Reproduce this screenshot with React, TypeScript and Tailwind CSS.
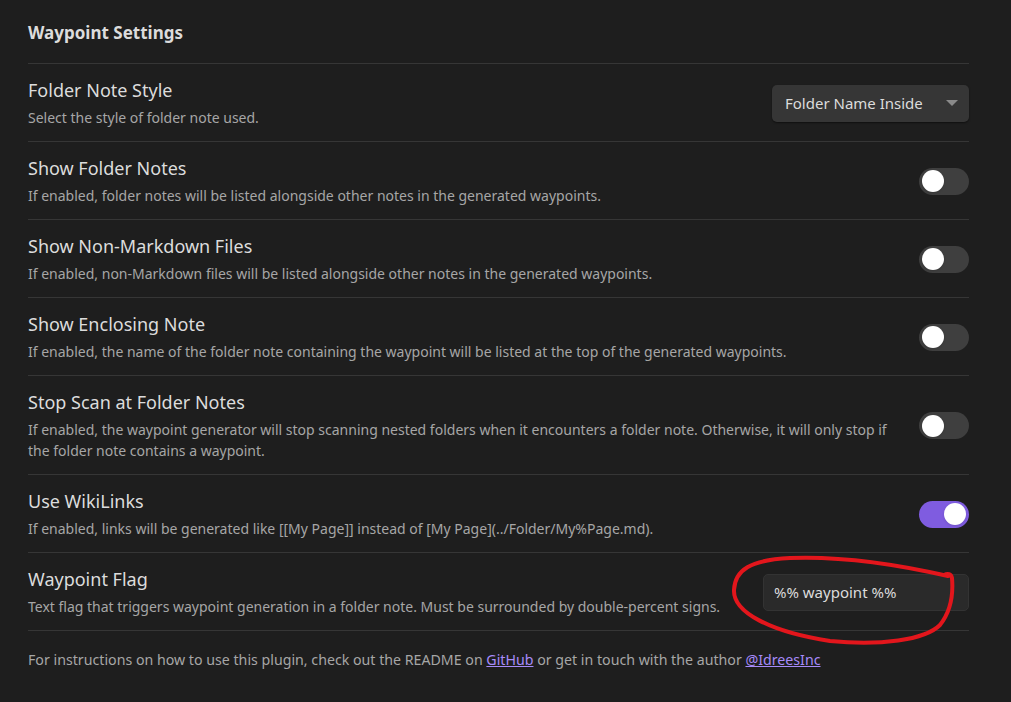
import { useState } from 'react';

interface ToggleRow {
  name: string;
  desc: string;
  on: boolean;
}

const toggles: ToggleRow[] = [
  {
    name: 'Show Folder Notes',
    desc: 'If enabled, folder notes will be listed alongside other notes in the generated waypoints.',
    on: false,
  },
  {
    name: 'Show Non-Markdown Files',
    desc: 'If enabled, non-Markdown files will be listed alongside other notes in the generated waypoints.',
    on: false,
  },
  {
    name: 'Show Enclosing Note',
    desc: 'If enabled, the name of the folder note containing the waypoint will be listed at the top of the generated waypoints.',
    on: false,
  },
  {
    name: 'Stop Scan at Folder Notes',
    desc: 'If enabled, the waypoint generator will stop scanning nested folders when it encounters a folder note. Otherwise, it will only stop if the folder note contains a waypoint.',
    on: false,
  },
  {
    name: 'Use WikiLinks',
    desc: 'If enabled, links will be generated like [[My Page]] instead of [My Page](../Folder/My%Page.md).',
    on: true,
  },
];

function Toggle({ initial }: { initial: boolean }) {
  const [on, setOn] = useState(initial);
  return (
    <button
      onClick={() => setOn(!on)}
      className={`flex h-[27px] w-[50px] shrink-0 items-center rounded-full px-[3px] ${
        on ? 'justify-end bg-[#7f5ce0]' : 'justify-start bg-[#3f3f3f]'
      }`}
    >
      <span className="h-[22px] w-[22px] rounded-full bg-white shadow" />
    </button>
  );
}

function SettingRow({
  name,
  desc,
  children,
}: {
  name: string;
  desc: string;
  children: React.ReactNode;
}) {
  return (
    <div className="flex items-center gap-6 border-t border-[#363636] pt-[14px] pb-[13px]">
      <div className="flex-1">
        <div className="text-[18px] leading-[24px] text-[#dcdcdc]">{name}</div>
        <div className="mt-[5px] text-[14px] leading-[21px] text-[#a6a6a6]">{desc}</div>
      </div>
      {children}
    </div>
  );
}

export default function App() {
  const [flag, setFlag] = useState('%% waypoint %%');

  return (
    <div
      className="relative h-[702px] w-[1011px] overflow-hidden bg-[#1e1e1e] pl-[28px] pr-[42px]"
      style={{ fontFamily: '"Noto Sans", "Open Sans", sans-serif' }}
    >
      <h2 className="pt-[19px] pb-[16px] text-[17px] font-bold leading-[28px] text-[#dcdcdc]">
        Waypoint Settings
      </h2>

      <SettingRow name="Folder Note Style" desc="Select the style of folder note used.">
        <div className="flex h-[37px] w-[197px] items-center justify-between rounded-[5px] bg-[#363636] pl-[13px] pr-[10px] text-[15px] text-[#dcdcdc] shadow-[0_1px_2px_rgba(0,0,0,0.5)]">
          <span>Folder Name Inside</span>
          <svg width="14" height="8" viewBox="0 0 14 8">
            <path d="M1 1 L13 1 L7 7 Z" fill="#8a8a8a" />
          </svg>
        </div>
      </SettingRow>

      {toggles.map((t) => (
        <SettingRow key={t.name} name={t.name} desc={t.desc}>
          <Toggle initial={t.on} />
        </SettingRow>
      ))}

      <SettingRow
        name="Waypoint Flag"
        desc="Text flag that triggers waypoint generation in a folder note. Must be surrounded by double-percent signs."
      >
        <input
          value={flag}
          onChange={(e) => setFlag(e.target.value)}
          className="h-[37px] w-[206px] rounded-[5px] border border-[#333] bg-[#2a2a2a] px-[10px] text-[15px] text-[#dcdcdc] outline-none"
        />
      </SettingRow>

      <div className="border-t border-[#363636] pt-[18px] text-[14.2px] leading-[22px] text-[#a6a6a6]">
        For instructions on how to use this plugin, check out the README on{' '}
        <a href="#" className="text-[#a78bfa] underline">
          GitHub
        </a>{' '}
        or get in touch with the author{' '}
        <a href="#" className="text-[#a78bfa] underline">
          @IdreesInc
        </a>
      </div>

      {/* hand drawn annotation */}
      <svg className="pointer-events-none absolute left-0 top-0" width="1011" height="702">
        <path
          d="M948 576 C 900 565, 840 556, 790 558 C 750 560, 735 570, 734 590 C 733 612, 770 632, 830 641 C 880 646, 925 640, 940 625 C 952 610, 953 590, 952 578 C 951 574, 948 573, 944 575"
          fill="none"
          stroke="#e3161c"
          strokeWidth="4"
          strokeLinecap="round"
          strokeLinejoin="round"
        />
      </svg>
    </div>
  );
}
